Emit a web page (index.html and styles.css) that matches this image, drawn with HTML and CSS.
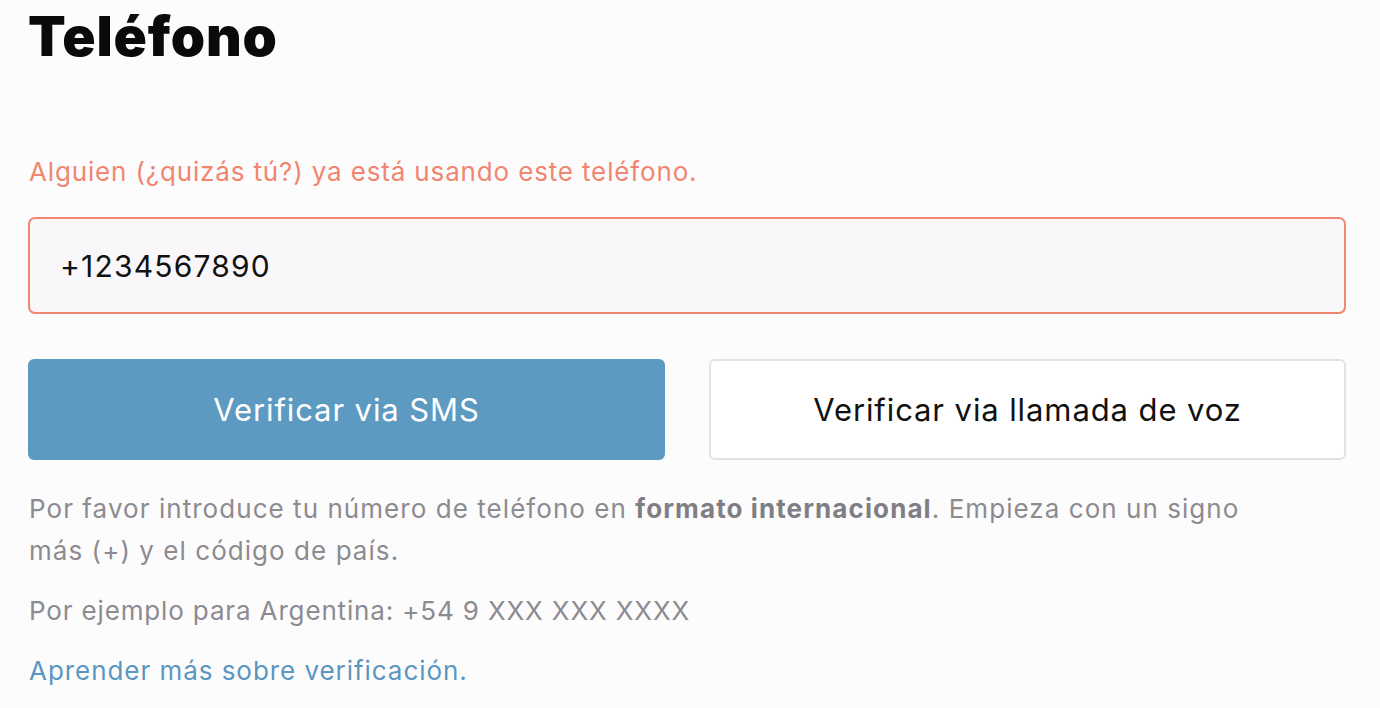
FILE: index.html
```html
<!DOCTYPE html>
<html lang="es">
<head>
<meta charset="utf-8">
<title>Teléfono</title>
<link rel="stylesheet" href="styles.css">
</head>
<body>
<main class="page">
  <h1 class="title">Teléfono</h1>
  <p class="error">Alguien (¿quizás tú?) ya está usando este teléfono.</p>
  <div class="field">+1234567890</div>
  <div class="actions">
    <button class="btn btn-primary">Verificar via SMS</button>
    <button class="btn btn-secondary">Verificar via llamada de voz</button>
  </div>
  <p class="help">Por favor introduce tu número de teléfono en <strong>formato internacional</strong>. Empieza con un signo<br>más (+) y el código de país.</p>
  <p class="help help-example">Por ejemplo para Argentina: +54 9 XXX XXX XXXX</p>
  <a class="link" href="#">Aprender más sobre verificación.</a>
</main>
</body>
</html>
```

FILE: styles.css
```css
html, body {
  margin: 0;
  padding: 0;
  background: #fdfcfd;
}

.page {
  font-family: "Inter", "Liberation Sans", Arial, sans-serif;
  padding: 8px 34px 0 28px;
  display: flex;
  flex-direction: column;
}

.title {
  margin: 0;
  font-size: 55px;
  line-height: 56px;
  font-weight: 900;
  color: #0a0a0a;
  letter-spacing: 0.8px;
}

.error {
  margin: 92px 0 0 1px;
  font-size: 26px;
  line-height: 32px;
  letter-spacing: 0.85px;
  color: #f0866f;
}

.field {
  margin-top: 29px;
  height: 97px;
  box-sizing: border-box;
  border: 2px solid #f2876f;
  border-radius: 7px;
  background: #f9f7fa;
  display: flex;
  align-items: center;
  padding-left: 30px;
  font-size: 30px;
  letter-spacing: 1.2px;
  color: #111;
}

.actions {
  margin-top: 45px;
  display: grid;
  grid-template-columns: 1fr 1fr;
  gap: 44px;
}

.btn {
  height: 101px;
  border-radius: 6px;
  font-family: inherit;
  font-size: 31px;
  letter-spacing: 0.9px;
  cursor: pointer;
}

.btn-primary {
  background: #5d9ac2;
  border: none;
  color: #fff;
}

.btn-secondary {
  background: #fff;
  border: 2px solid #e3e2e5;
  color: #111;
}

.help {
  margin: 28px 0 0 1px;
  font-size: 26px;
  line-height: 42px;
  letter-spacing: 1.05px;
  color: #8c8b90;
}

.help-example {
  margin-top: 18px;
  letter-spacing: 0.85px;
}

.help strong {
  color: #7f7e84;
  font-weight: 700;
  letter-spacing: 1.1px;
}

.link {
  margin: 18px 0 0 1px;
  font-size: 26px;
  line-height: 42px;
  letter-spacing: 0.95px;
  color: #5b96c1;
  text-decoration: none;
  align-self: flex-start;
}
```
